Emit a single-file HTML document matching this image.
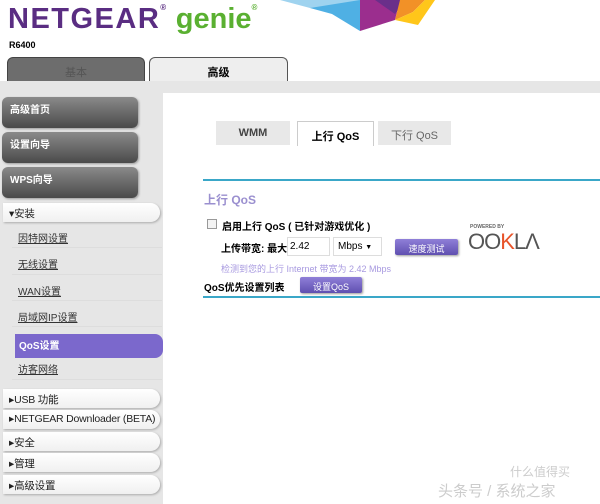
<!DOCTYPE html>
<html><head><meta charset="utf-8"><style>
*{margin:0;padding:0;box-sizing:border-box}
body{width:600px;height:504px;overflow:hidden;background:#fff;font-family:"Liberation Sans","Noto Sans CJK SC",sans-serif;position:relative;font-size:11px}
.a{position:absolute}
.dark{position:absolute;left:2px;width:136px;height:31px;border-radius:6px;background:linear-gradient(#8a8a8a,#4a4a4a);color:#fff;font-size:10px;font-weight:bold;padding:4px 8px;box-shadow:1px 1px 2px #999}
.pill{position:absolute;left:3px;width:157px;height:19px;border-radius:0 10px 10px 0;background:linear-gradient(#fff,#f0f0f0);box-shadow:1px 1px 2px #aaa;font-size:10.5px;padding:3px 6px;color:#222;white-space:nowrap;letter-spacing:-0.2px}
.sub{position:absolute;left:18px;font-size:10px;color:#333;text-decoration:underline}
.sep{position:absolute;left:12px;width:150px;height:1px;background:#ddd}
.btn{position:absolute;background:linear-gradient(#8f7fd8,#5f4fb0);color:#fff;font-size:9px;text-align:center;border-radius:2px;box-shadow:1px 1px 2px #999}
</style></head><body>
<div class="a" style="left:8px;top:3px;font-size:29px;font-weight:bold;color:#5a2d82;letter-spacing:1.5px;white-space:nowrap">NETGEAR<span style="font-size:8px;vertical-align:top">®</span><span style="color:#5ab031;letter-spacing:0"> genie</span><span style="color:#5ab031;font-size:8px;vertical-align:top">®</span></div>
<svg class="a" style="left:270px;top:0" width="170" height="32"><polygon points="10,0 90,0 70,12 40,8" fill="#9fd3ef"/><polygon points="40,8 90,0 90,31 62,14" fill="#4fb0e4"/><polygon points="90,0 130,0 125,20 90,31" fill="#9b2e8e"/><polygon points="105,0 135,0 125,14" fill="#6a2f8a"/><polygon points="130,0 155,0 143,12 125,20" fill="#f29127"/><polygon points="125,20 143,12 155,0 165,0 148,25" fill="#ffc61a"/></svg>
<div class="a" style="left:9px;top:40px;font-size:9px;font-weight:bold">R6400</div>
<div class="a" style="left:7px;top:57px;width:138px;height:25px;background:#6d6d6d;border:1px solid #444;border-bottom:none;border-radius:6px 6px 0 0;color:#555;text-align:center;padding-top:6px;font-size:11px">基本</div>
<div class="a" style="left:149px;top:57px;width:139px;height:25px;background:#eee;border:1px solid #555;border-bottom:none;border-radius:6px 6px 0 0;text-align:center;padding-top:6px;font-size:11px;font-weight:bold">高级</div>
<div class="a" style="left:0;top:81px;width:600px;height:423px;background:#e6e6e6"></div>
<div class="a" style="left:163px;top:93px;width:437px;height:411px;background:#fff"></div>
<div class="dark" style="top:97px">高级首页</div>
<div class="dark" style="top:132px">设置向导</div>
<div class="dark" style="top:167px">WPS向导</div>
<div class="pill" style="top:203px">▾安装</div>
<div class="sub" style="top:230px">因特网设置</div><div class="sep" style="top:247px"></div>
<div class="sub" style="top:256px">无线设置</div><div class="sep" style="top:274px"></div>
<div class="sub" style="top:283px">WAN设置</div><div class="sep" style="top:300px"></div>
<div class="sub" style="top:309px">局域网IP设置</div><div class="sep" style="top:326px"></div>
<div class="a" style="left:15px;top:334px;width:148px;height:24px;background:#7b68cc;border-radius:0 8px 8px 0;color:#fff;font-size:10px;font-weight:bold;padding:3px 4px">QoS设置</div>
<div class="sub" style="top:361px">访客网络</div><div class="sep" style="top:379px"></div>
<div class="pill" style="top:389px">▸USB 功能</div>
<div class="pill" style="top:410px">▸NETGEAR Downloader (BETA)</div>
<div class="pill" style="top:432px">▸安全</div>
<div class="pill" style="top:453px">▸管理</div>
<div class="pill" style="top:475px">▸高级设置</div>
<div class="a" style="left:216px;top:121px;width:74px;height:24px;background:#e8e8e8;text-align:center;padding-top:6px;font-weight:bold;color:#444">WMM</div>
<div class="a" style="left:297px;top:121px;width:77px;height:25px;background:#fff;border:1px solid #ccc;border-bottom:none;text-align:center;padding-top:6px;font-weight:bold">上行 QoS</div>
<div class="a" style="left:378px;top:121px;width:73px;height:24px;background:#e8e8e8;text-align:center;padding-top:6px;color:#666">下行 QoS</div>
<div class="a" style="left:203px;top:179px;width:397px;height:2px;background:#3aa7c8"></div>
<div class="a" style="left:204px;top:191px;font-size:12px;font-weight:bold;color:#9a8fcf">上行 QoS</div>
<div class="a" style="left:207px;top:219px;width:10px;height:10px;border:1px solid #999;background:#f3f3f3"></div>
<div class="a" style="left:222px;top:218px;font-size:10px;font-weight:bold">启用上行 QoS ( 已针对游戏优化 )</div>
<div class="a" style="left:221px;top:240px;font-size:10px;font-weight:bold">上传带宽: 最大</div>
<div class="a" style="left:287px;top:237px;width:43px;height:19px;border:1px solid #ddd;padding:3px 2px;font-size:10px">2.42</div>
<div class="a" style="left:333px;top:237px;width:49px;height:19px;border:1px solid #ddd;padding:3px 4px;font-size:10px">Mbps <span style="font-size:7px">▼</span></div>
<div class="btn" style="left:395px;top:239px;width:63px;height:16px;padding-top:3px">速度测试</div>
<div class="a" style="left:470px;top:224px;font-size:5px;font-weight:bold;color:#666">POWERED BY</div>
<div class="a" style="left:468px;top:229px;font-size:22px;color:#555;letter-spacing:-1px;font-weight:300">OO<span style="color:#e8542a">K</span>LΛ</div>
<div class="a" style="left:221px;top:262px;font-size:9px;color:#a89ae0">检测到您的上行 Internet 带宽为 2.42 Mbps</div>
<div class="a" style="left:204px;top:279px;font-size:10px;font-weight:bold">QoS优先设置列表</div>
<div class="btn" style="left:300px;top:277px;width:62px;height:16px;padding-top:3px">设置QoS</div>
<div class="a" style="left:203px;top:296px;width:397px;height:2px;background:#3aa7c8"></div>
<div class="a" style="left:438px;top:480px;font-size:15px;color:#ccc">头条号 / 系统之家</div>
<div class="a" style="left:510px;top:463px;font-size:12px;color:#ccc">什么值得买</div>
</body></html>
